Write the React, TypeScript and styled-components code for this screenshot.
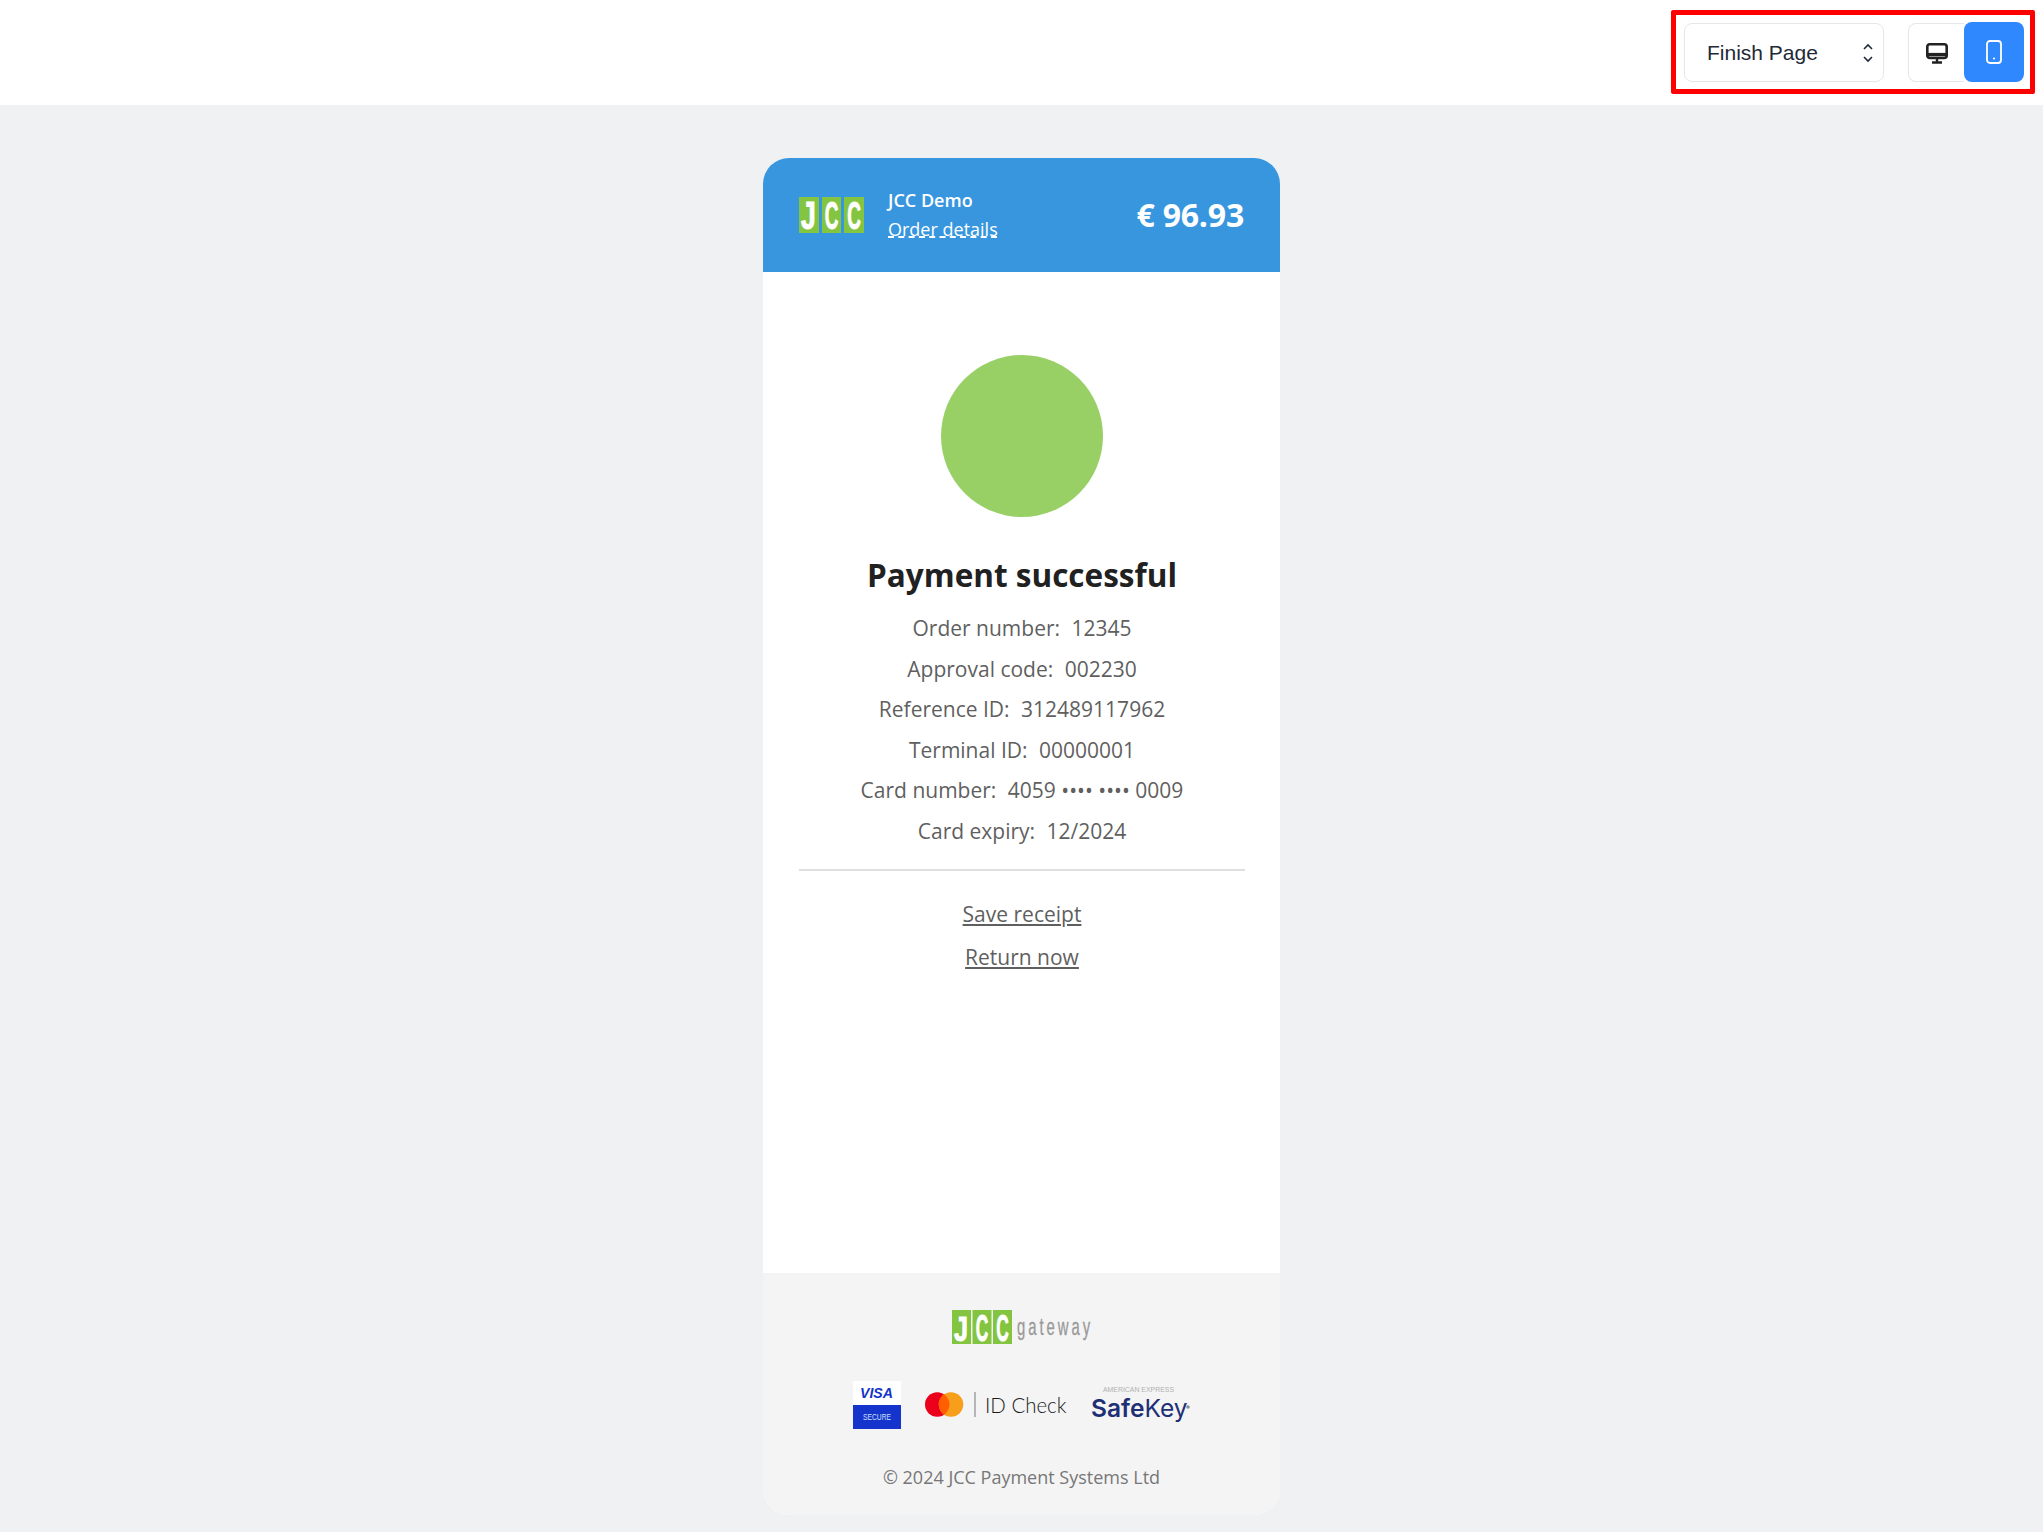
import React from 'react';
import styled, { createGlobalStyle } from 'styled-components';

const GlobalStyle = createGlobalStyle`
    html, body {
        margin: 0;
        padding: 0;
        background: #f0f1f3;
    }
    * {
        box-sizing: border-box;
    }
`;

const Page = styled.div`
    display: flex;
    flex-direction: column;
    min-height: 1532px;
    background: #f0f1f3;
    font-family: 'Open Sans', sans-serif;
`;

const TopBar = styled.header`
    display: flex;
    justify-content: flex-end;
    align-items: flex-start;
    height: 105px;
    padding: 10px 8px 0 0;
    background: #fff;
`;

const Highlight = styled.div`
    display: flex;
    align-items: flex-start;
    gap: 24px;
    width: 364px;
    height: 84px;
    padding: 7px 6px 0 8px;
    border: 5px solid #ff0000;
    border-radius: 2px;
`;

const SelectBox = styled.div`
    display: flex;
    align-items: center;
    justify-content: space-between;
    width: 200px;
    height: 59px;
    margin-top: 1px;
    padding: 0 8px 0 22px;
    border: 1px solid #e5e7eb;
    border-radius: 8px;
    background: #fff;
    color: #1f2937;
    font-family: 'Liberation Sans', sans-serif;
    font-size: 21px;
`;

const Toggle = styled.div`
    display: flex;
    width: 116px;
    height: 60px;
`;

const ToggleButton = styled.div<{ $active?: boolean; }>`
    display: flex;
    align-items: center;
    justify-content: center;
    width: ${({ $active }) => ($active ? '60px' : '56px')};
    height: ${({ $active }) => ($active ? '60px' : '59px')};
    margin-top: ${({ $active }) => ($active ? '0' : '1px')};
    border: ${({ $active }) => ($active ? 'none' : '1px solid #e5e7eb')};
    border-right: none;
    border-radius: ${({ $active }) => ($active ? '8px' : '8px 0 0 8px')};
    background: ${({ $active }) => ($active ? '#3088ff' : '#fff')};
`;

const Card = styled.main`
    display: flex;
    flex-direction: column;
    width: 517px;
    height: 1357px;
    margin: 53px auto 0;
    border-radius: 26px;
    background: #fff;
    overflow: hidden;
`;

const CardHeader = styled.div`
    display: flex;
    align-items: center;
    height: 114px;
    padding: 0 36px;
    background: #3896df;
    color: #fff;
`;

const Merchant = styled.div`
    display: flex;
    flex-direction: column;
    margin-left: 24px;
    font-size: 18px;
    line-height: 29px;
`;

const MerchantName = styled.span`
    font-weight: 600;
`;

const OrderLink = styled.a`
    color: #fff;
    text-decoration: underline dashed;
`;

const Amount = styled.div`
    margin-left: auto;
    margin-top: -1px;
    font-size: 32px;
    font-weight: 700;
    letter-spacing: -0.2px;
`;

const CardBody = styled.div`
    display: flex;
    flex: 1;
    flex-direction: column;
    align-items: center;
    padding: 83px 35px 0 36px;
`;

const SuccessCircle = styled.div`
    width: 162px;
    height: 162px;
    border-radius: 50%;
    background: #98d066;
`;

const Title = styled.h1`
    margin: 36px 0 11px;
    color: #212121;
    font-size: 31.5px;
    font-weight: 700;
    line-height: 44px;
`;

const InfoRow = styled.div`
    color: #5f5f5f;
    font-size: 21px;
    line-height: 40.6px;
    white-space: pre;
`;

const InfoLabel = styled.span`
    margin-right: 0.5px;
`;

const Divider = styled.hr`
    width: 100%;
    height: 2px;
    margin: 17px 0 22px;
    border: none;
    background: #dfdfdf;
`;

const ActionLink = styled.a`
    color: #5f5f5f;
    font-size: 21px;
    line-height: 43px;
    text-decoration: underline;
`;

const CardFooter = styled.footer`
    display: flex;
    flex-direction: column;
    align-items: center;
    height: 242px;
    padding-top: 37px;
    background: #f4f4f4;
`;

const BadgeRow = styled.div`
    display: flex;
    align-items: center;
    gap: 23px;
    margin-top: 37px;
`;

const Copyright = styled.div`
    margin-top: 35px;
    color: #777;
    font-size: 18px;
    line-height: 26px;
`;

const JccLogo = () => (
    <svg width="65" height="36" viewBox="0 0 65 36" overflow="visible">
        {[[0, 20], [23, 19], [45, 20]].map(([x, w]) => (
            <rect key={x} x={x} width={w} height="36" fill="#83c441" />
        ))}
        <g fill="#fff" stroke="#fff" strokeWidth="1" fontFamily="'Liberation Sans', sans-serif" fontSize="38" fontWeight="700" textAnchor="middle">
            <text transform="translate(9.5 32) scale(0.7 1)">J</text>
            <text transform="translate(32.5 32) scale(0.5 1)">C</text>
            <text transform="translate(55 32) scale(0.5 1)">C</text>
        </g>
    </svg>
);

const GatewayLogo = () => (
    <svg width="140" height="34" viewBox="0 0 140 34" overflow="visible">
        {[0, 20.5, 41].map((x) => (
            <rect key={x} x={x} width="19" height="34" fill="#83c441" />
        ))}
        <g fill="#fff" stroke="#fff" strokeWidth="1" fontFamily="'Liberation Sans', sans-serif" fontSize="36" fontWeight="700" textAnchor="middle">
            <text transform="translate(9 30.5) scale(0.7 1)">J</text>
            <text transform="translate(30 30.5) scale(0.48 1)">C</text>
            <text transform="translate(50.5 30.5) scale(0.48 1)">C</text>
        </g>
        <text transform="translate(65 25) scale(0.62 1)" fill="#999" stroke="#999" strokeWidth="0.3" fontFamily="'Liberation Sans', sans-serif" fontSize="24" letterSpacing="4.8">
            gateway
        </text>
    </svg>
);

const VisaBadge = () => (
    <svg width="49" height="48" viewBox="0 0 49 48">
        <rect width="48" height="24" fill="#fff" />
        <rect y="24" width="48" height="24" fill="#1434cb" />
        <text x="7" y="17" fill="#1434cb" fontFamily="'Liberation Sans', sans-serif" fontSize="15.5" fontStyle="italic" fontWeight="700" textLength="33" lengthAdjust="spacingAndGlyphs">
            VISA
        </text>
        <text x="10" y="39" fill="#cfe0ff" fontFamily="'Liberation Sans', sans-serif" fontSize="9" textLength="28" lengthAdjust="spacingAndGlyphs">
            SECURE
        </text>
    </svg>
);

const IdCheckBadge = () => (
    <svg width="143" height="30" viewBox="0 0 143 30" overflow="visible">
        <circle cx="12.25" cy="14.5" r="12.25" fill="#eb001b" />
        <circle cx="26" cy="14.5" r="12.25" fill="#f79e1b" />
        <path d="M19.1 4.36a12.25 12.25 0 0 1 0 20.28a12.25 12.25 0 0 1 0-20.28z" fill="#ff5f00" />
        <rect x="49" y="2" width="2" height="25" fill="#b5b5b5" />
        <text x="60" y="22.7" fill="#1a1a1a" fontFamily="Lato, sans-serif" fontSize="21.5" fontWeight="300" textLength="81.5" lengthAdjust="spacingAndGlyphs">
            ID Check
        </text>
    </svg>
);

const SafeKeyBadge = () => (
    <svg width="99" height="38" viewBox="0 0 99 38" overflow="visible">
        <text x="12" y="6" fill="#b0b0b0" fontFamily="'Liberation Sans', sans-serif" fontSize="7.5" textLength="71" lengthAdjust="spacingAndGlyphs">
            AMERICAN EXPRESS
        </text>
        <text x="0" y="31" fill="#1f2f76" fontFamily="Inter, sans-serif" fontSize="24.5">
            <tspan fontWeight="600">Safe</tspan>
            <tspan fontWeight="400">Key</tspan>
        </text>
        <circle cx="97" cy="21" r="1.7" fill="#8a8a8a" />
    </svg>
);

const rows = [
    ['Order number', '12345'],
    ['Approval code', '002230'],
    ['Reference ID', '312489117962'],
    ['Terminal ID', '00000001'],
    ['Card number', '4059 •••• •••• 0009'],
    ['Card expiry', '12/2024'],
];

export default function App() {
    return (
        <Page>
            <GlobalStyle />
            <TopBar>
                <Highlight>
                    <SelectBox>
                        Finish Page
                        <svg width="14" height="24" viewBox="0 0 14 24" fill="none" stroke="#1f2937" strokeWidth="1.6">
                            <path d="M3 8 7 4l4 4" />
                            <path d="M3 16l4 4 4-4" />
                        </svg>
                    </SelectBox>
                    <Toggle>
                        <ToggleButton>
                            <svg width="24" height="22" viewBox="0 0 24 22" fill="none" stroke="#222">
                                <rect x="2.3" y="2.2" width="19.4" height="13.8" rx="2.5" strokeWidth="2.6" />
                                <path d="M2.3 12.6h19.4" strokeWidth="3.4" />
                                <path d="M12 16v4M7 20.5h10" strokeWidth="2.4" />
                            </svg>
                        </ToggleButton>
                        <ToggleButton $active>
                            <svg width="16" height="24" viewBox="0 0 16 24" fill="none" stroke="#fff" strokeWidth="1.8">
                                <rect x="1" y="1" width="14" height="22" rx="3" />
                                <circle cx="8" cy="18.5" r="1.1" fill="#fff" stroke="none" />
                            </svg>
                        </ToggleButton>
                    </Toggle>
                </Highlight>
            </TopBar>
            <Card>
                <CardHeader>
                    <JccLogo />
                    <Merchant>
                        <MerchantName>JCC Demo</MerchantName>
                        <OrderLink>Order details</OrderLink>
                    </Merchant>
                    <Amount>€ 96.93</Amount>
                </CardHeader>
                <CardBody>
                    <SuccessCircle />
                    <Title>Payment successful</Title>
                    {rows.map(([label, value]) => (
                        <InfoRow key={label}>
                            <InfoLabel>{label}:{'  '}</InfoLabel>
                            {value}
                        </InfoRow>
                    ))}
                    <Divider />
                    <ActionLink>Save receipt</ActionLink>
                    <ActionLink>Return now</ActionLink>
                </CardBody>
                <CardFooter>
                    <GatewayLogo />
                    <BadgeRow>
                        <VisaBadge />
                        <IdCheckBadge />
                        <SafeKeyBadge />
                    </BadgeRow>
                    <Copyright>© 2024 JCC Payment Systems Ltd</Copyright>
                </CardFooter>
            </Card>
        </Page>
    );
}
